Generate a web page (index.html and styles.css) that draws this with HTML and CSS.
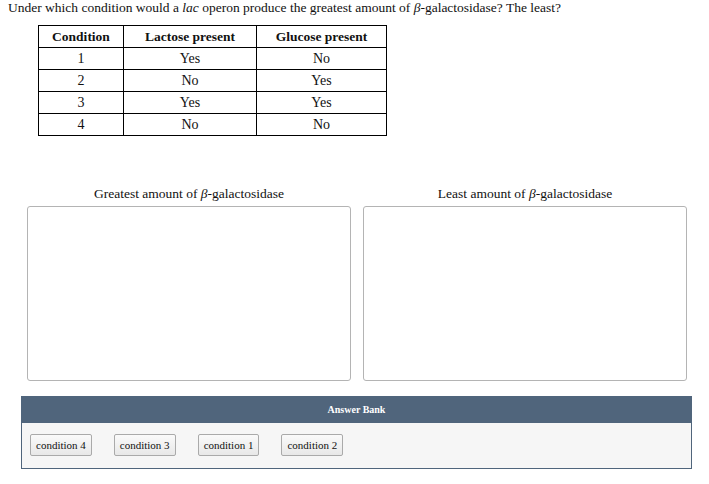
FILE: index.html
```html
<!DOCTYPE html>
<html>
<head>
<meta charset="utf-8">
<link rel="stylesheet" href="styles.css">
</head>
<body>
<p class="question">Under which condition would a <i>lac</i> operon produce the greatest amount of <i>β</i>-galactosidase? The least?</p>
<table class="data">
  <tr><th>Condition</th><th>Lactose present</th><th>Glucose present</th></tr>
  <tr><td>1</td><td>Yes</td><td>No</td></tr>
  <tr><td>2</td><td>No</td><td>Yes</td></tr>
  <tr><td>3</td><td>Yes</td><td>Yes</td></tr>
  <tr><td>4</td><td>No</td><td>No</td></tr>
</table>
<div class="targets">
  <div class="target">
    <div class="label">Greatest amount of <i>β</i>-galactosidase</div>
    <div class="drop"></div>
  </div>
  <div class="target">
    <div class="label">Least amount of <i>β</i>-galactosidase</div>
    <div class="drop"></div>
  </div>
</div>
<div class="bank">
  <div class="bank-head">Answer Bank</div>
  <div class="bank-body">
    <span class="chip">condition 4</span>
    <span class="chip">condition 3</span>
    <span class="chip">condition 1</span>
    <span class="chip">condition 2</span>
  </div>
</div>
</body>
</html>
```
FILE: styles.css
```css
body {
  margin: 0;
  font-family: "Liberation Serif", "Times New Roman", serif;
  color: #111;
  background: #fff;
}
.question {
  margin: 0;
  padding: 0 0 0 8px;
  font-size: 13.5px;
  line-height: 16px;
}
.data {
  margin: 9px 0 0 38px;
  border-collapse: collapse;
  font-size: 14px;
}
.data th, .data td {
  border: 1px solid #000;
  height: 21px;
  padding: 0;
  text-align: center;
  line-height: 14px;
}
.data th { font-weight: bold; font-size: 13.5px; }
.data th:nth-child(1) { width: 84px; }
.data th:nth-child(2) { width: 132px; }
.data th:nth-child(3) { width: 129px; }
.targets {
  display: flex;
  gap: 12px;
  margin: 50px 0 0 27px;
  width: 660px;
}
.target {
  width: 324px;
}
.label {
  text-align: center;
  font-size: 13.5px;
  line-height: 16px;
  margin-bottom: 4px;
}
.drop {
  height: 173px;
  border: 1px solid #b4b4b4;
  border-radius: 3px;
  background: #fff;
}
.bank {
  margin: 15px 0 0 21px;
  width: 671px;
}
.bank-head {
  background: #50657c;
  color: #fff;
  text-align: center;
  font-size: 10px;
  font-weight: bold;
  height: 27px;
  line-height: 27px;
}
.bank-body {
  background: #f6f6f6;
  border: 1px solid #50657c;
  border-top: 0;
  height: 46px;
  box-sizing: border-box;
  display: flex;
  align-items: center;
  gap: 22px;
  padding: 0 0 2px 8px;
}
.chip {
  display: inline-block;
  font-size: 11px;
  line-height: 20px;
  height: 20px;
  padding: 0 5px;
  border: 1px solid #aaa;
  border-radius: 2px;
  background: linear-gradient(#fafafa, #e8e8e8);
}
```
